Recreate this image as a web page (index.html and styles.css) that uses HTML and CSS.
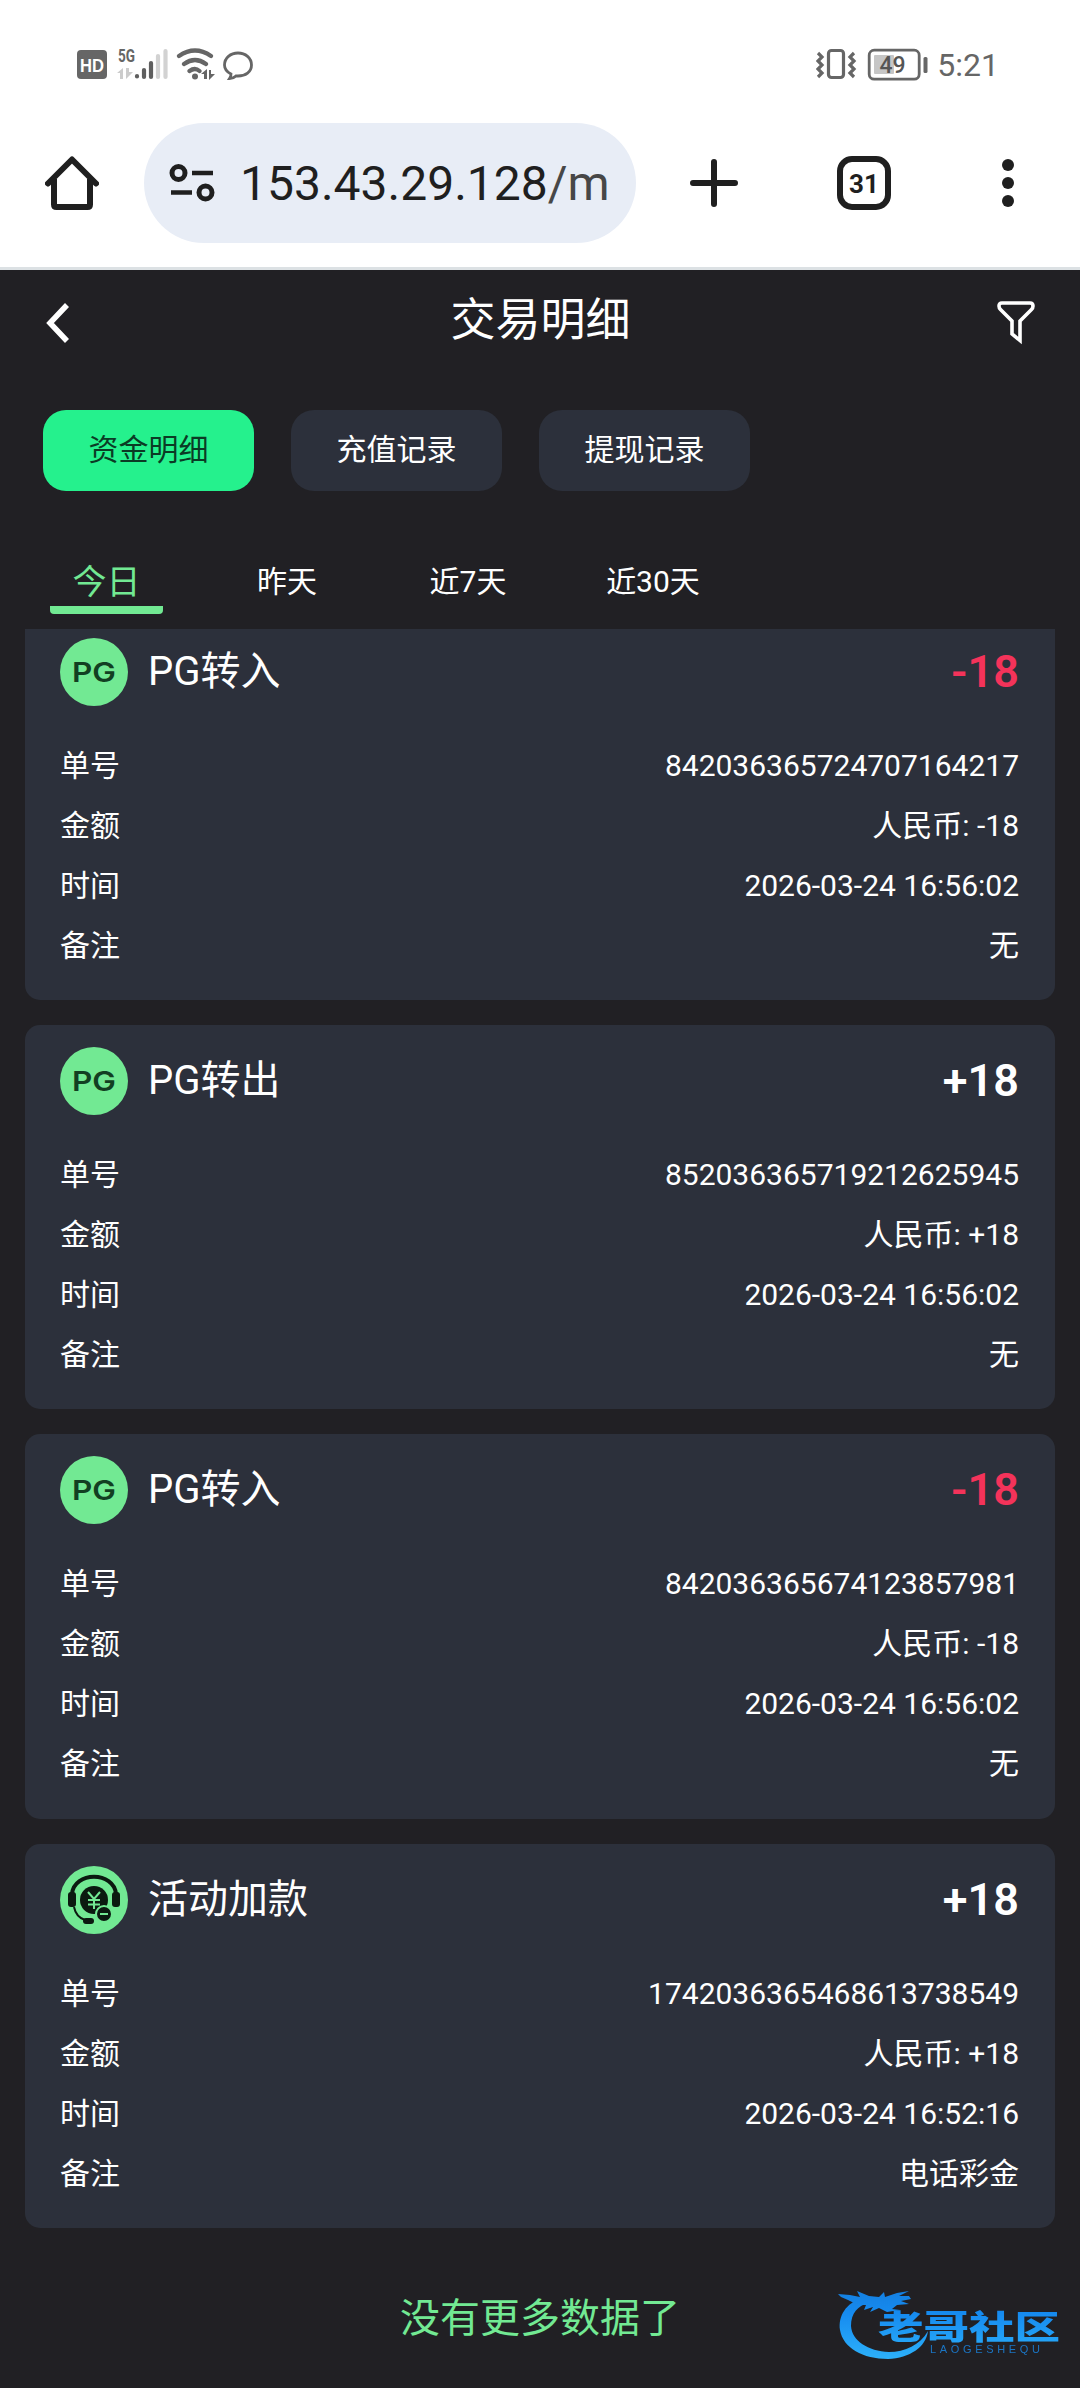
FILE: index.html
```html
<!DOCTYPE html>
<html lang="zh-CN">
<head>
<meta charset="utf-8">
<title>交易明细</title>
<link rel="stylesheet" href="styles.css">
</head>
<body>
<header class="status">
  <svg class="status-left" width="180" height="36" viewBox="76 46 180 36">
    <rect x="77" y="50" width="30" height="29" rx="4" fill="#666"/>
    <text x="80" y="71.500" textLength="24" lengthAdjust="spacingAndGlyphs" class="hd">HD</text>
    <text x="118" y="62" textLength="17" lengthAdjust="spacingAndGlyphs" class="five-g">5G</text>
    <g fill="#ccc"><path d="M117 73l6-5v11h-3v-6zM126 68h3v4h4l-7 7z"/></g>
    <g stroke-width="4.200" stroke-linecap="round" stroke="#5f5f5f">
      <path d="M137 76v.5M144 70v7M151 63v14"/>
      <path d="M158 56v21M165.500 51v26" stroke="#d2d2d2"/>
    </g>
    <g fill="none" stroke="#666" stroke-width="4.200" stroke-linecap="round">
      <path d="M179 56q16-11 32 0M184 64q11-8 22 0M189.500 71q5.500-4 10 0"/>
    </g>
    <circle cx="195" cy="76.500" r="3" fill="#666"/>
    <path d="M201 74l6-5v10h-3v-5zM209 70h2v4h4l-6 6z" fill="#666"/>
    <path d="M231 74c-4-2-6.500-5-6.500-9 0-7 6-12 13.500-12s13.500 5 13.500 12-6 11-13.500 11h-2c-2 2-4 2.500-6.500 2.500 1-1.500 1.700-2.500 1.500-4.500z" fill="none" stroke="#666" stroke-width="2.800"/>
  </svg>
  <div class="status-right">
    <svg width="112" height="34" viewBox="816 48 112 34">
      <g fill="none" stroke="#666" stroke-width="3.200">
        <path d="M818 53l4 4-4 4 4 4-4 4 4 4-4 4M854 53l-4 4 4 4-4 4 4 4-4 4 4 4"/>
        <rect x="828.500" y="50.500" width="15" height="27" rx="3"/>
        <rect x="869.200" y="50.200" width="50" height="29" rx="5" stroke-width="2.800"/>
      </g>
      <rect x="874" y="55" width="20" height="19" rx="1" fill="#c6c6c6"/>
      <rect x="923.500" y="57" width="4" height="16" rx="1.500" fill="#666"/>
      <text x="879.500" y="73" class="battery">49</text>
    </svg>
    <span class="clock">5:21</span>
  </div>
</header>
<div class="toolbar">
  <svg class="home" width="54" height="54" viewBox="0 0 54 54" fill="none" stroke="#1f1f1f" stroke-width="6">
    <path d="M3 27.500L27 3.500l24 24" stroke-linecap="round" stroke-linejoin="round"/>
    <path d="M9 23v25.500q0 2.500 2.500 2.500h31q2.500 0 2.500-2.500V23"/>
  </svg>
  <div class="address">
    <svg width="46" height="38" viewBox="0 0 46 38" fill="none" stroke="#1f1f1f">
      <circle cx="9.500" cy="9" r="6.500" stroke-width="5"/>
      <circle cx="36.500" cy="28.500" r="6.500" stroke-width="5"/>
      <path d="M23 9h21M2 28.500h21" stroke-width="4.500"/>
    </svg>
    <span class="url">153.43.29.128<span class="path">/m</span></span>
  </div>
  <svg class="plus" width="48" height="48" viewBox="0 0 48 48"><path d="M3 24h42M24 3v42" stroke="#1f1f1f" stroke-width="6" stroke-linecap="round"/></svg>
  <div class="tab-count">31</div>
  <svg class="more" width="12" height="48" viewBox="0 0 12 48" fill="#1f1f1f"><circle cx="6" cy="6" r="6"/><circle cx="6" cy="24" r="6"/><circle cx="6" cy="42" r="6"/></svg>
</div>
<main class="app">
  <div class="titlebar">
    <svg width="24" height="40" viewBox="0 0 24 40"><path d="M21 2L4 20l17 18" fill="none" stroke="#fff" stroke-width="5.500"/></svg>
    <h1>交易明细</h1>
    <svg width="38" height="44" viewBox="0 0 38 44"><path d="M5 2h28q3 0 3 3 0 2-1.500 3.500L23 20v19.500L15 33V20L3.500 8.500Q2 7 2 5q0-3 3-3z" fill="none" stroke="#fff" stroke-width="3.600"/></svg>
  </div>
  <nav class="types">
    <button class="type active">资金明细</button>
    <button class="type">充值记录</button>
    <button class="type">提现记录</button>
  </nav>
  <nav class="ranges">
    <span class="range active">今日</span>
    <span class="range">昨天</span>
    <span class="range week">近7天</span>
    <span class="range month">近30天</span>
  </nav>
  <section class="list">
    <article class="card clipped">
      <header class="card-head">
        <svg class="badge" viewBox="0 0 68 68"><circle cx="34" cy="34" r="34" fill="#72e993"/><text x="12" y="44" textLength="44" lengthAdjust="spacingAndGlyphs" class="pg-text">PG</text></svg>
        <h2>PG转入</h2><b class="minus">-18</b>
      </header>
      <dl><dt>单号</dt><dd>842036365724707164217</dd><dt>金额</dt><dd>人民币: -18</dd><dt>时间</dt><dd>2026-03-24 16:56:02</dd><dt>备注</dt><dd>无</dd></dl>
    </article>
    <article class="card">
      <header class="card-head">
        <svg class="badge" viewBox="0 0 68 68"><circle cx="34" cy="34" r="34" fill="#72e993"/><text x="12" y="44" textLength="44" lengthAdjust="spacingAndGlyphs" class="pg-text">PG</text></svg>
        <h2>PG转出</h2><b>+18</b>
      </header>
      <dl><dt>单号</dt><dd>852036365719212625945</dd><dt>金额</dt><dd>人民币: +18</dd><dt>时间</dt><dd>2026-03-24 16:56:02</dd><dt>备注</dt><dd>无</dd></dl>
    </article>
    <article class="card">
      <header class="card-head">
        <svg class="badge" viewBox="0 0 68 68"><circle cx="34" cy="34" r="34" fill="#72e993"/><text x="12" y="44" textLength="44" lengthAdjust="spacingAndGlyphs" class="pg-text">PG</text></svg>
        <h2>PG转入</h2><b class="minus">-18</b>
      </header>
      <dl><dt>单号</dt><dd>842036365674123857981</dd><dt>金额</dt><dd>人民币: -18</dd><dt>时间</dt><dd>2026-03-24 16:56:02</dd><dt>备注</dt><dd>无</dd></dl>
    </article>
    <article class="card">
      <header class="card-head">
        <svg class="badge" viewBox="0 0 68 68">
          <circle cx="34" cy="34" r="34" fill="#72e993"/>
          <g fill="none" stroke="#0b1a10">
            <path d="M12 28C14 5 54 5 56 28" stroke-width="4"/>
            <path d="M14 41q2 10 11 13" stroke-width="2"/>
          </g>
          <g fill="#0b1a10">
            <rect x="8" y="26" width="8" height="15" rx="3"/>
            <rect x="52" y="26" width="8" height="15" rx="3"/>
            <circle cx="34" cy="34" r="14"/>
            <rect x="23" y="52" width="11" height="6" rx="3"/>
            <circle cx="44" cy="48" r="8" stroke="#72e993" stroke-width="2"/>
          </g>
          <path d="M28 26l6 7 6-7M34 33v10M28 34h12M28 38.500h12M40 48h8" fill="none" stroke="#72e993" stroke-width="2"/>
        </svg>
        <h2>活动加款</h2><b>+18</b>
      </header>
      <dl><dt>单号</dt><dd>1742036365468613738549</dd><dt>金额</dt><dd>人民币: +18</dd><dt>时间</dt><dd>2026-03-24 16:52:16</dd><dt>备注</dt><dd>电话彩金</dd></dl>
    </article>
  </section>
  <p class="end">没有更多数据了</p>
</main>
<svg class="watermark" width="230" height="80" viewBox="835 2284 230 80">
  <defs><linearGradient id="blue" x1="0" y1="2290" x2="0" y2="2358" gradientUnits="userSpaceOnUse"><stop offset="0" stop-color="#147fe0"/><stop offset=".35" stop-color="#168bf0"/><stop offset="1" stop-color="#2cb0fa"/></linearGradient></defs>
  <g fill="url(#blue)">
    <path d="M862 2298C846 2303 838 2316 840 2330C843 2348 863 2359 888 2359C910 2358 926 2347 928 2331C920 2345 905 2352 889 2352C868 2351 852 2341 851 2326C851 2313 858 2306 868 2303z"/>
    <path d="M838 2294l12 1 10 2-3-6 12 5 10 1 5-5 1 5 12-4 12-2-10 5 10 0 2 3-10 2 8 3-12 1-5 4 8 1-13 2-8-4-9 4 3-5-9 3 2-5-8 0-10-5-7-3z"/>
    <text x="878" y="2339" textLength="182" lengthAdjust="spacingAndGlyphs" class="mark-cn">老哥社区</text>
    <text x="930" y="2352.500" textLength="110" class="mark-en" fill="#1b75c4">LAOGESHEQU</text>
  </g>
</svg>
</body>
</html>
```
FILE: styles.css
```css
* { box-sizing: border-box; }
body {
  position: relative;
  margin: 0;
  width: 1080px;
  height: 2388px;
  overflow: hidden;
  background: #212024;
  color: #fff;
  font-family: Roboto, "Noto Sans CJK SC", sans-serif;
}
h1, h2, p, dl, dd { margin: 0; font-weight: 400; }
svg { display: block; flex: none; }

.status {
  display: flex;
  justify-content: space-between;
  align-items: flex-start;
  height: 123px;
  padding: 46px 81px 0 76px;
  background: #fff;
}
.status-right { display: flex; gap: 9px; padding-top: 2px; }
.clock { color: #666; font-size: 32px; line-height: 34px; }
.hd { font: 700 19px "Liberation Sans", sans-serif; fill: #fff; }
.five-g { font: 700 18px Roboto, sans-serif; fill: #666; }
.battery { font: 500 23px Roboto, sans-serif; fill: #555; }

.toolbar {
  display: flex;
  align-items: center;
  height: 147px;
  padding: 0 66px 24px 45px;
  background: #fff;
  border-bottom: 3px solid #dce1e4;
}
.address {
  display: flex;
  align-items: center;
  width: 492px;
  height: 120px;
  margin-left: 45px;
  padding-left: 25px;
  border-radius: 60px;
  background: #e8edf6;
  color: #1f1f1f;
}
.url { margin-left: 25px; padding-top: 1px; font-size: 48px; line-height: 60px; }
.path { color: #474747; }
.plus { margin-left: 54px; }
.tab-count {
  width: 54px;
  height: 54px;
  margin-left: 99px;
  border: 6px solid #1f1f1f;
  border-radius: 15px;
  color: #1f1f1f;
  font-size: 26px;
  font-weight: 700;
  line-height: 44px;
  text-align: center;
}
.more { margin-left: auto; }

.titlebar {
  display: grid;
  grid-template-columns: 38px 1fr 38px;
  align-items: center;
  height: 106px;
  padding: 0 45px 0 46px;
}
.titlebar h1 { padding-bottom: 4px; font-size: 45px; line-height: 60px; text-align: center; }

.types { display: flex; gap: 37px; padding: 34px 43px 0; }
.type {
  width: 211px;
  height: 81px;
  padding: 0 0 2px;
  border: 0;
  border-radius: 23px;
  background: #2c303b;
  color: #fff;
  font: 30px/40px Roboto, "Noto Sans CJK SC", sans-serif;
}
.type.active { background: #25f18d; color: #0b3b25; }

.ranges {
  display: flex;
  height: 138px;
  padding: 66px 0 0 50px;
  font-size: 30px;
  line-height: 50px;
  text-align: center;
}
.range { width: 182px; }
.range.week { width: 180px; }
.range.month { width: 190px; }
.range.active {
  width: 113px;
  height: 57px;
  margin-right: 33px;
  border-radius: 4px;
  background: linear-gradient(#72e993, #72e993) 0 100% / 100% 8px no-repeat;
  color: #72e993;
  font-size: 34px;
}

.list { display: grid; gap: 25px; padding: 0 25px; }
.card {
  height: 384.300px;
  padding: 22px 36px 0 35px;
  border-radius: 15px;
  background: #2c303b;
}
.card.clipped { height: 371px; padding-top: 9px; border-radius: 0 0 15px 15px; }
.card-head { display: flex; align-items: center; height: 68px; }
.badge { width: 68px; height: 68px; }
.pg-text { font: 600 27px Inter, sans-serif; fill: #123f22; }
.card-head h2 { margin-left: 20px; font-size: 40px; line-height: 60px; }
.card-head b { margin-left: auto; font-size: 45px; font-weight: 600; line-height: 60px; }
.minus { color: #f4335a; }
.card dl {
  display: grid;
  grid-template-columns: auto 1fr;
  grid-auto-rows: 60px;
  padding-top: 30px;
  font-size: 30px;
  line-height: 60px;
}
.card dd { text-align: right; }

.end { padding-top: 61px; color: #72e993; font-size: 40px; line-height: 60px; text-align: center; }

.watermark { position: absolute; left: 835px; top: 2284px; filter: blur(.7px); }
.mark-cn { font: 900 33px "Noto Sans CJK SC", sans-serif; }
.mark-en { font: 11px "Liberation Sans", sans-serif; }
```
